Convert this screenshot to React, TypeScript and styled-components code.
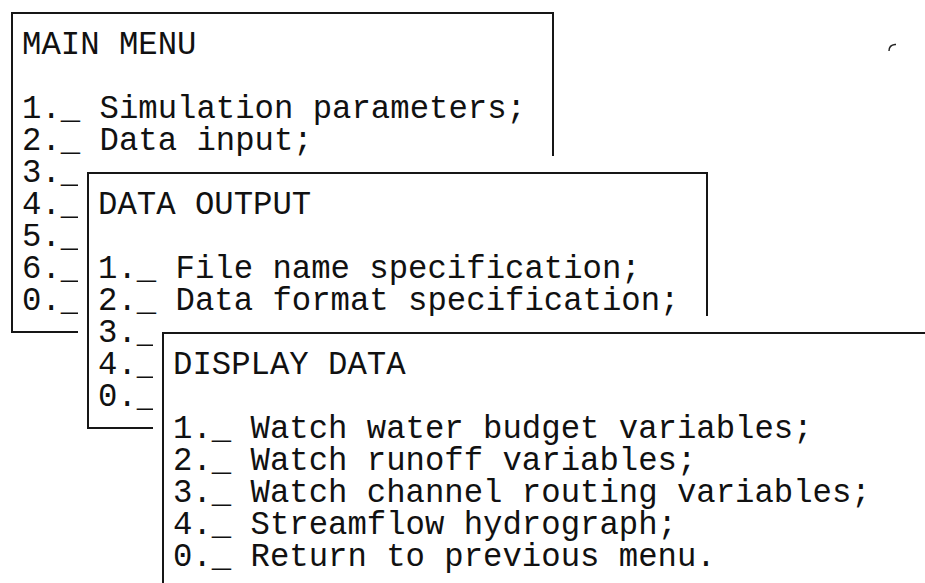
import React from 'react'
import styled, { createGlobalStyle } from 'styled-components'

const GlobalStyle = createGlobalStyle`
  html, body {
    margin: 0;
    padding: 0;
    background: #ffffff;
  }
  body {
    overflow: hidden;
  }
`

const Desk = styled.div`
  position: relative;
  width: 925px;
  height: 583px;
  overflow: hidden;
  background: #ffffff;
  font-family: "Liberation Mono", "DejaVu Sans Mono", monospace;
  font-size: 32.3px;
  line-height: 32px;
  color: #111111;
`

// each menu is a window laid over the one before it; the white
// shadow up and to the left hides the edges of the window below
const Window = styled.div<{ $left: number; $top: number; $width: number }>`
  position: absolute;
  left: ${(p) => p.$left}px;
  top: ${(p) => p.$top}px;
  width: ${(p) => p.$width}px;
  box-sizing: border-box;
  background: #ffffff;
  border: 2px solid #161616;
  padding: 16px 8px 13px 9px;
  box-shadow: -9px -16px 0 0 #ffffff;
`

const Title = styled.div`
  white-space: pre;
  margin-bottom: 32px;
`

const Items = styled.div`
  display: flex;
  flex-direction: column;
`

const Item = styled.div`
  white-space: pre;
`

const Speck = styled.svg`
  position: absolute;
  left: 886px;
  top: 42px;
`

type MenuProps = {
  title: string
  items: string[]
  left: number
  top: number
  width: number
}

const Menu = ({ title, items, left, top, width }: MenuProps) => (
  <Window $left={left} $top={top} $width={width}>
    <Title>{title}</Title>
    <Items>
      {items.map((it) => (
        <Item key={it}>{it}</Item>
      ))}
    </Items>
  </Window>
)

const App = () => {
  return (
    <Desk>
      <GlobalStyle />
      <Speck width="12" height="10" viewBox="0 0 12 10">
        <path d="M3 9 Q3 3 9 2.5 L10 2.5" stroke="#222" strokeWidth="1.4" fill="none" />
      </Speck>
      <Menu
        title="MAIN MENU"
        left={11}
        top={12}
        width={543}
        items={[
          '1._ Simulation parameters;',
          '2._ Data input;',
          '3._',
          '4._',
          '5._',
          '6._',
          '0._',
        ]}
      />
      <Menu
        title="DATA OUTPUT"
        left={87}
        top={172}
        width={621}
        items={[
          '1._ File name specification;',
          '2._ Data format specification;',
          '3._',
          '4._',
          '0._',
        ]}
      />
      <Menu
        title="DISPLAY DATA"
        left={162}
        top={332}
        width={820}
        items={[
          '1._ Watch water budget variables;',
          '2._ Watch runoff variables;',
          '3._ Watch channel routing variables;',
          '4._ Streamflow hydrograph;',
          '0._ Return to previous menu.',
        ]}
      />
    </Desk>
  )
}

export default App
